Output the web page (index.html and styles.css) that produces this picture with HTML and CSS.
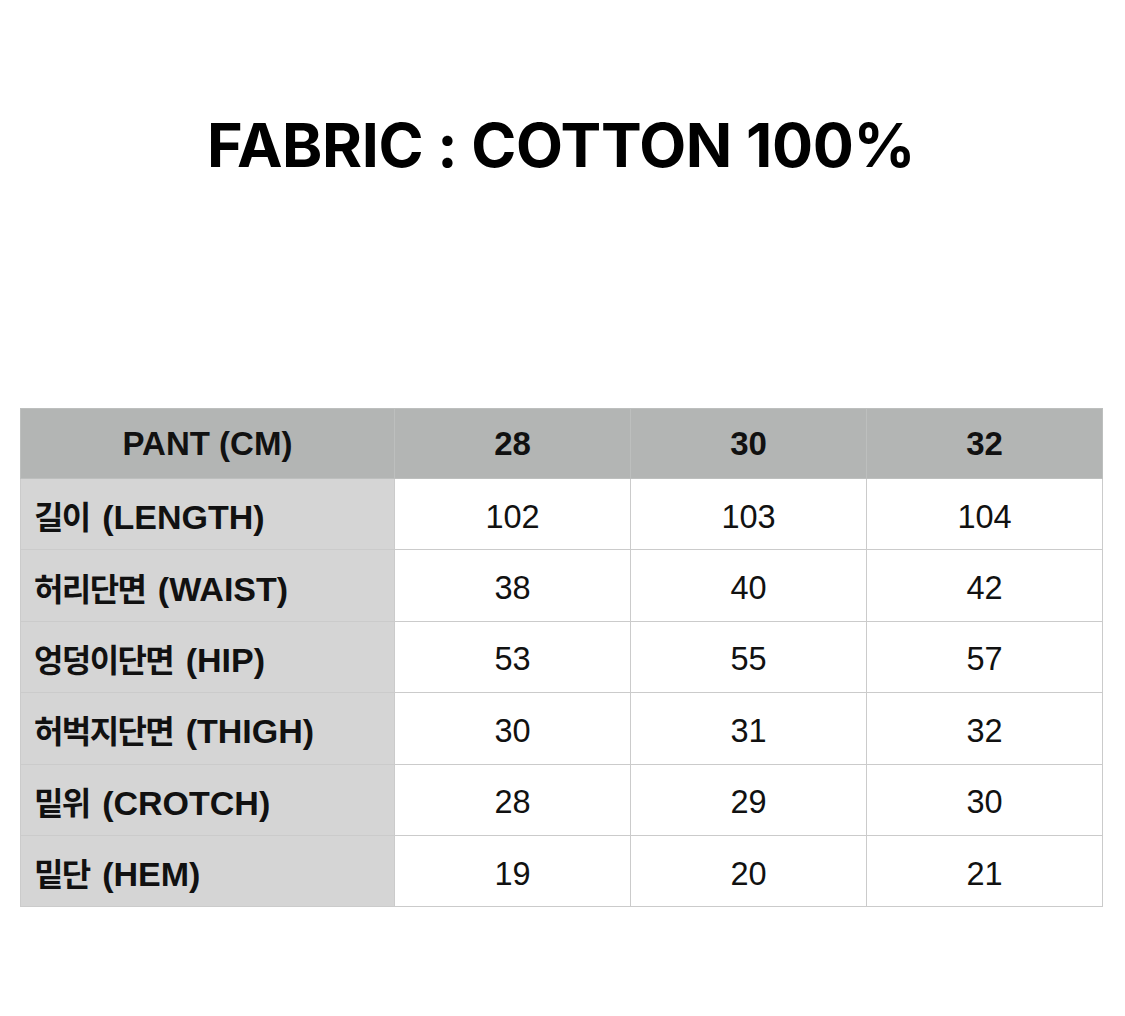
FILE: index.html
```html
<!DOCTYPE html>
<html lang="ko">
<head>
<meta charset="utf-8">
<link rel="stylesheet" href="styles.css">
</head>
<body>
<div class="page">
  <h1 class="title">FABRIC : COTTON 100%</h1>
  <table class="size-table">
    <thead>
      <tr><th class="label-h">PANT (CM)</th><th>28</th><th>30</th><th>32</th></tr>
    </thead>
    <tbody>
      <tr><td class="label"><span class="ko">길이</span> (LENGTH)</td><td>102</td><td>103</td><td>104</td></tr>
      <tr><td class="label"><span class="ko">허리단면</span> (WAIST)</td><td>38</td><td>40</td><td>42</td></tr>
      <tr><td class="label"><span class="ko">엉덩이단면</span> (HIP)</td><td>53</td><td>55</td><td>57</td></tr>
      <tr><td class="label"><span class="ko">허벅지단면</span> (THIGH)</td><td>30</td><td>31</td><td>32</td></tr>
      <tr><td class="label"><span class="ko">밑위</span> (CROTCH)</td><td>28</td><td>29</td><td>30</td></tr>
      <tr><td class="label"><span class="ko">밑단</span> (HEM)</td><td>19</td><td>20</td><td>21</td></tr>
    </tbody>
  </table>
</div>
</body>
</html>
```
FILE: styles.css
```css
html, body {
  margin: 0;
  padding: 0;
  background: #ffffff;
}
.page {
  width: 1125px;
  height: 1016px;
  padding: 0 0 0 20px;
  box-sizing: border-box;
}
.title {
  margin: 0;
  padding-top: 108px;
  height: 300px;
  box-sizing: border-box;
  width: 1082px;
  text-align: center;
  font-family: Inter, "Liberation Sans", sans-serif;
  font-weight: 700;
  font-size: 61px;
  line-height: 74px;
  letter-spacing: -0.4px;
  color: #000;
}
.size-table {
  margin-top: 108px;
  border-collapse: collapse;
  width: 1083px;
  table-layout: fixed;
  font-family: "Liberation Sans", "Noto Sans CJK KR", sans-serif;
  color: #111;
}
.size-table th,
.size-table td {
  border: 1.5px solid #cbcbcb;
  padding: 0;
  text-align: center;
  box-sizing: border-box;
}
.size-table th {
  height: 70px;
  background: #b3b5b4;
  font-weight: 700;
  font-size: 33px;
  border-color: #bdbfbe;
}
.size-table th.label-h { width: 374px; }
.size-table td {
  height: 71.4px;
  padding-top: 6px;
  font-size: 32.5px;
  font-weight: 400;
  background: #fff;
}
.size-table td.label {
  background: #d5d5d5;
  text-align: left;
  padding-left: 13px;
  padding-top: 2px;
  font-weight: 700;
  font-size: 34px;
}
.size-table .ko {
  font-family: "Noto Sans CJK KR", sans-serif;
  font-size: 32px;
  letter-spacing: -1.6px;
  margin-right: 3px;
}
```
